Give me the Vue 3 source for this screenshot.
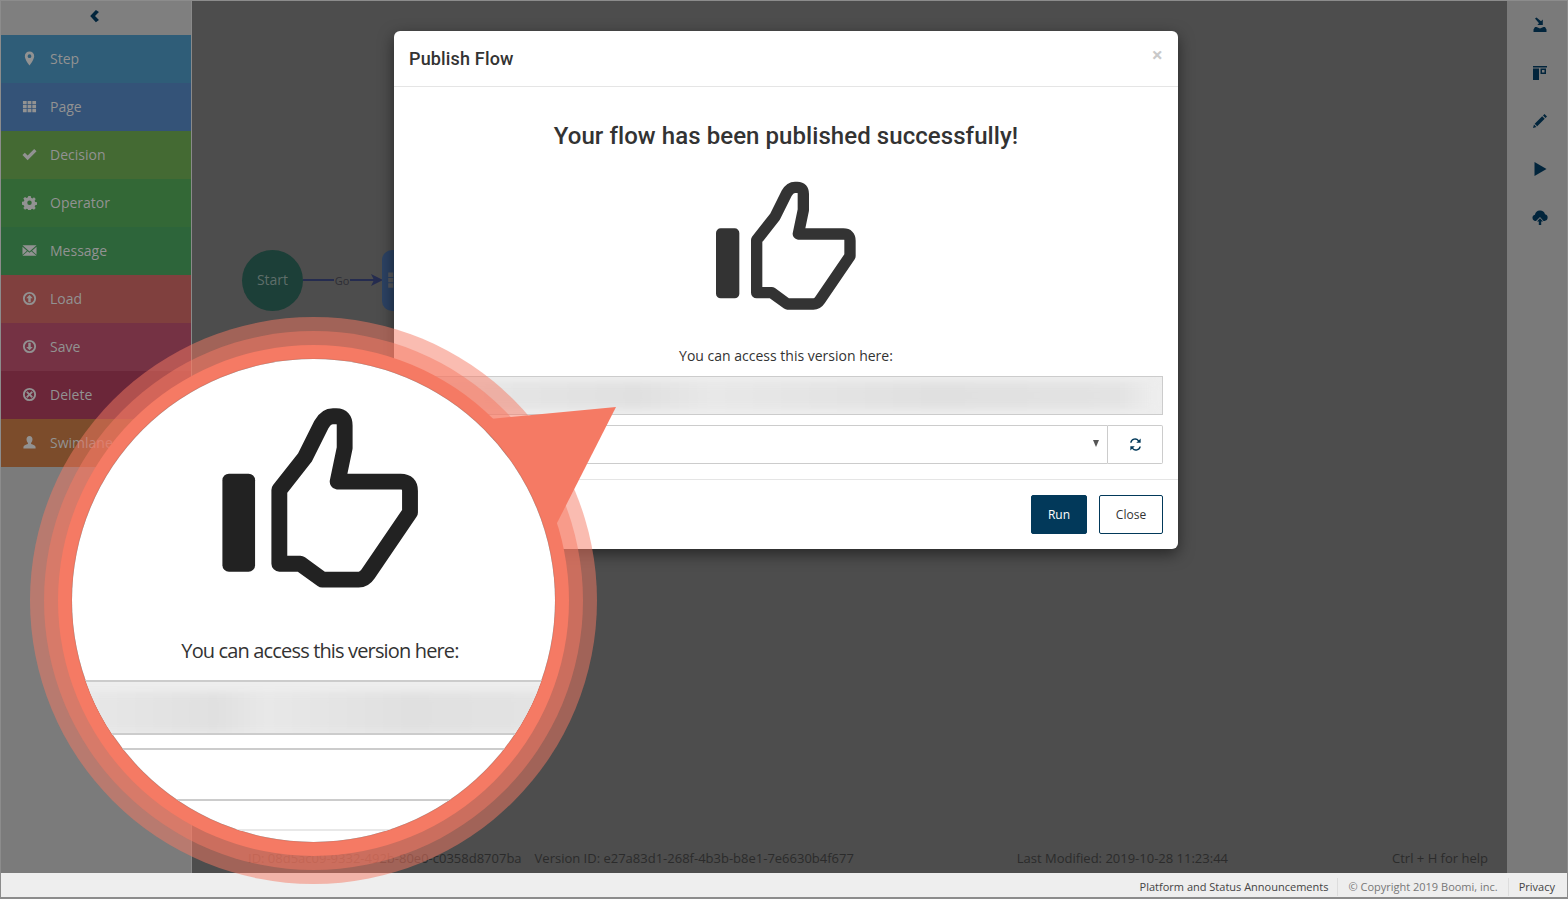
<template>
  <div class="app">
    <div class="workspace">
      <aside class="palette">
        <div class="palette__toggle">
          <svg class="palette__chevron" viewBox="0 0 16 16"><path d="M9 1 12.500 3.500 8 8 12.500 12.500 9 15 2.500 8z" /></svg>
        </div>
        <div v-for="item in paletteItems" :key="item.label" class="palette__item" :style="{ background: item.color }">
          <svg class="palette__icon" viewBox="0 0 16 16"><path fill-rule="evenodd" :d="item.icon" /></svg>
          <span>{{ item.label }}</span>
        </div>
      </aside>

      <main class="canvas">
        <div class="node-start">Start</div>
        <div class="node-link">
          <span class="node-link__line"></span>
          <span class="node-link__label">Go</span>
          <span class="node-link__line node-link__line--short"></span>
          <svg class="node-link__head" viewBox="0 0 12 12"><path d="M0 0 12 6 0 12 3 6z" /></svg>
        </div>
        <div class="node-page">
          <svg viewBox="0 0 16 16"><path :d="icons.grid" /></svg>
        </div>

        <div class="canvas__status">
          <span>ID: 08d5ac09-9332-492b-80e0-c0358d8707ba</span>
          <span>Version ID: e27a83d1-268f-4b3b-b8e1-7e6630b4f677</span>
          <span class="canvas__modified">Last Modified: 2019-10-28 11:23:44</span>
          <span class="canvas__help">Ctrl + H for help</span>
        </div>
      </main>

      <aside class="toolbar">
        <svg v-for="tool in toolIcons" :key="tool" class="toolbar__icon" viewBox="0 0 16 16"><path fill-rule="evenodd" :d="tool" /></svg>
      </aside>
    </div>

    <footer class="footer">
      <span class="footer__link">Platform and Status Announcements</span>
      <span class="footer__copy">© Copyright 2019 Boomi, inc.</span>
      <span class="footer__link">Privacy</span>
    </footer>

    <section class="modal">
      <header class="modal__header">
        <h4>Publish Flow</h4>
        <span class="modal__close">×</span>
      </header>
      <div class="modal__body">
        <h3>Your flow has been published successfully!</h3>
        <svg class="thumb" viewBox="0 0 600 510">
          <rect x="108" y="205" width="70" height="210" rx="14" />
          <path :d="thumbPath" />
        </svg>
        <p>You can access this version here:</p>
        <div class="url-box"><div class="url-box__blur"></div></div>
        <div class="player-row">
          <div class="player-row__select"><span class="caret"></span></div>
          <button class="player-row__refresh" type="button">
            <svg viewBox="0 0 16 16"><path :d="icons.refresh" /></svg>
          </button>
        </div>
      </div>
      <div class="modal__footer">
        <button class="btn btn--primary" type="button">Run</button>
        <button class="btn" type="button">Close</button>
      </div>
    </section>

    <!-- callout -->
    <div class="lens">
      <svg class="lens__pointer" viewBox="0 0 600 300"><polygon points="586,90 460,102 440,160 500,240 526,208" /></svg>
      <div class="lens__ring">
        <div class="lens__solid">
          <div class="lens__glass">
            <svg class="lens__thumb" viewBox="0 0 600 510">
              <rect x="108" y="205" width="70" height="210" rx="14" />
              <path :d="thumbPath" />
            </svg>
            <div class="lens__text">You can access this version here:</div>
            <div class="lens__input"><div class="lens__blur"></div></div>
            <div class="lens__select"></div>
            <div class="lens__rule"></div>
          </div>
        </div>
      </div>
    </div>
  </div>
</template>

<script setup>
const ring = "M8 1a7 7 0 1 0 0 14A7 7 0 0 0 8 1zm0 2a5 5 0 1 1 0 10A5 5 0 0 1 8 3z"

const icons = {
  pin: "M8 .5a5 5 0 0 0-5 5C3 9 8 15.500 8 15.500S13 9 13 5.500a5 5 0 0 0-5-5zm0 3a2 2 0 1 1 0 4 2 2 0 0 1 0-4z",
  grid: "M1 2h4v3.500H1zM6 2h4v3.500H6zM11 2h4v3.500h-4zM1 6.300h4v3.500H1zM6 6.300h4v3.500H6zM11 6.300h4v3.500h-4zM1 10.600h4v3.500H1zM6 10.600h4v3.500H6zM11 10.600h4v3.500h-4z",
  check: "M.5 8.500 3 6l3 3 7-7 2.500 2.500L6 14z",
  cog: "M6.700 1h2.600l.4 2 1.400.6 1.700-1.100 1.800 1.800-1.100 1.700.6 1.400 2 .4v2.600l-2 .4-.6 1.400 1.100 1.700-1.800 1.800-1.700-1.100-1.400.6-.4 2H6.700l-.4-2-1.400-.6-1.700 1.100-1.800-1.800 1.100-1.700-.6-1.400-2-.4V7.300l2-.4.6-1.400-1.100-1.700 1.800-1.800 1.700 1.100 1.400-.6zM8 5.800a2.400 2.400 0 1 0 0 4.800 2.400 2.400 0 0 0 0-4.800z",
  mail: "M.5 2.500h15L8 9zM.5 4l4.800 4.200L.5 12.500zM15.500 4l-4.800 4.200 4.800 4.300zM.5 13.500l5.600-4.700L8 10.500l1.900-1.700 5.600 4.700z",
  up: ring + "M8 4l3.500 3.600H9.300V12H6.700V7.600H4.500z",
  down: ring + "M8 12 4.500 8.400h2.200V4h2.600v4.400h2.200z",
  remove: ring + "M5.800 4.400 8 6.600l2.200-2.200 1.400 1.400L9.400 8l2.200 2.200-1.400 1.400L8 9.400l-2.200 2.200-1.400-1.400L6.600 8 4.400 5.800z",
  user: "M8 1c-2 0-3.200 1.500-3.200 3.500 0 1.500.6 3 1.500 3.800v1.200C4 10.200 1.500 11 1.500 13v1.500h13V13c0-2-2.500-2.800-4.800-3.500V8.300c.9-.8 1.500-2.300 1.500-3.800C11.200 2.500 10 1 8 1z",
  refresh: "M13.500 1.500v4.700H8.800l1.800-1.800A3.800 3.800 0 0 0 3.800 6H2.300a5.300 5.300 0 0 1 9.400-2.500zM2.500 14.500V9.800h4.700l-1.800 1.800a3.800 3.800 0 0 0 6.800-1.600h1.500a5.300 5.300 0 0 1-9.400 2.500z",
}

const paletteItems = [
  { label: "Step", color: "#2f5d78", icon: icons.pin },
  { label: "Page", color: "#345378", icon: icons.grid },
  { label: "Decision", color: "#446a33", icon: icons.check },
  { label: "Operator", color: "#336836", icon: icons.cog },
  { label: "Message", color: "#2d653a", icon: icons.mail },
  { label: "Load", color: "#80403e", icon: icons.up },
  { label: "Save", color: "#753244", icon: icons.down },
  { label: "Delete", color: "#6b2639", icon: icons.remove },
  { label: "Swimlane", color: "#7c4c2b", icon: icons.user },
]

const toolIcons = [
  "M3 1.500 4.500.5 9 4.300 10.800 2.500V8H5.300L7 6.300zM1.500 12.500 3 10h1.500L8 11.500 11.500 10H13l1.500 2.500V15h-13z",
  "M1 1h14v1.500H1zM1 3.500h6V15H1zM8.500 3.500H14V9H8.500zM10 5v2.500h2.500V5z",
  "M12.500 1 15 3.500l-1.500 1.500-2.500-2.500zM10.200 3.300l2.500 2.500L5.200 13.300l-2.500-2.500zM2 11.500 4.500 14l-3.500 1z",
  "M2.500 1 14.500 8 2.500 15z",
  "M4 12H3.500a3.200 3.200 0 0 1-.6-6.300A5.200 5.200 0 0 1 13 5.300 3.400 3.400 0 0 1 12.500 12H11.500L8 8zM8 9.200l3 3.300H9.200V16H6.800v-3.500H5z",
]

const thumbPath =
  "M230 398V240L285 170L320 100Q330 82 345 82H352Q370 82 370 102V150L355 222H490Q510 222 510 242V288L420 420Q412 432 400 432H322L275 398Z"
</script>

<style scoped>
.app {
  position: relative;
  width: 1568px;
  height: 899px;
  box-sizing: border-box;
  border: 1px solid #8c8c8c;
  border-bottom-width: 2px;
  display: flex;
  flex-direction: column;
  overflow: hidden;
  font-family: "Open Sans", sans-serif;
}

.workspace {
  flex: 1;
  display: flex;
  min-height: 0;
}

/* PALETTE */

.palette {
  width: 191px;
  flex: none;
  box-sizing: border-box;
  background: #7b7b7b;
  border-right: 1px solid #8a8a8a;
}

.palette__toggle {
  height: 34px;
  box-sizing: border-box;
  padding: 0 0 4px;
  display: flex;
  align-items: center;
  justify-content: center;
  background: #7f7f7f;
}

.palette__chevron {
  width: 14px;
  height: 14px;
  margin-left: -2px;
  fill: #02253c;
}

.palette__item {
  height: 48px;
  box-sizing: border-box;
  display: flex;
  align-items: center;
  gap: 13px;
  padding: 0 0 2px 21px;
  color: #929292;
  font-size: 14px;
}

.palette__icon {
  width: 15px;
  height: 15px;
  fill: #929292;
}

/* CANVAS */

.canvas {
  position: relative;
  flex: 1;
  display: flex;
  align-items: flex-end;
  background: #4d4d4d;
}

.node-start {
  position: absolute;
  left: 50px;
  top: 249px;
  width: 61px;
  height: 61px;
  box-sizing: border-box;
  padding-bottom: 2px;
  border-radius: 50%;
  background: #1c3f38;
  color: #5f6e6a;
  font-size: 14px;
  display: flex;
  align-items: center;
  justify-content: center;
}

.node-link {
  position: absolute;
  left: 111px;
  top: 269px;
  width: 80px;
  height: 20px;
  display: flex;
  align-items: center;
}

.node-link__line {
  width: 31px;
  height: 2px;
  background: #252c4f;
}

.node-link__line--short {
  width: 24px;
}

.node-link__label {
  width: 16px;
  color: #2e2e35;
  font-size: 11px;
  text-align: center;
}

.node-link__head {
  width: 12px;
  height: 12px;
  margin-left: -3px;
  flex: none;
  fill: #252c4f;
}

.node-page {
  position: absolute;
  left: 190px;
  top: 249px;
  width: 60px;
  height: 61px;
  border-radius: 10px;
  background: #2c4263;
}

.node-page svg {
  position: absolute;
  left: 5px;
  top: 20px;
  width: 20px;
  height: 20px;
  fill: #56585c;
}

.canvas__status {
  flex: 1;
  display: flex;
  gap: 13px;
  padding: 0 19px 6px 56px;
  color: #2b2b2b;
  font-size: 13px;
  line-height: 17px;
  white-space: nowrap;
}

.canvas__modified {
  margin-left: auto;
}

.canvas__help {
  margin-left: 151px;
}

/* TOOLBAR */

.toolbar {
  width: 60px;
  flex: none;
  display: flex;
  flex-direction: column;
  align-items: center;
  gap: 32px;
  padding: 16px 0 0 5px;
  box-sizing: border-box;
  background: #7a7a7a;
}

.toolbar__icon {
  width: 16px;
  height: 16px;
  fill: #02253c;
}

/* FOOTER */

.footer {
  height: 24px;
  flex: none;
  box-sizing: border-box;
  display: flex;
  justify-content: flex-end;
  align-items: center;
  padding: 3px 12px 0 0;
  background: #eeeeee;
  font-size: 11px;
  color: #444444;
}

.footer span {
  line-height: 18px;
  white-space: nowrap;
}

.footer__copy {
  margin: 0 10px 0 9px;
  padding: 0 10px;
  border-left: 1px solid #dddddd;
  border-right: 1px solid #dddddd;
  color: #777777;
}

/* MODAL */

.modal {
  position: absolute;
  left: 393px;
  top: 30px;
  width: 784px;
  height: 518px;
  box-sizing: border-box;
  display: flex;
  flex-direction: column;
  background: #ffffff;
  border-radius: 6px;
  box-shadow: 0 5px 15px rgba(0, 0, 0, 0.5);
}

.modal__header {
  height: 56px;
  flex: none;
  box-sizing: border-box;
  display: flex;
  align-items: center;
  justify-content: space-between;
  padding: 0 15px;
  border-bottom: 1px solid #e5e5e5;
}

.modal__header h4 {
  margin: 0;
  color: #333333;
  font-family: Roboto, sans-serif;
  font-size: 18px;
  font-weight: 500;
  letter-spacing: 0.16px;
}

.modal__close {
  margin: -9px 0 0;
  color: #c9c9c9;
  font-size: 20px;
  font-weight: 700;
}

.modal__body {
  flex: 1;
  display: flex;
  flex-direction: column;
  align-items: center;
  padding: 0 15px;
}

.modal__body h3 {
  margin: 34px 0 0;
  color: #333333;
  font-family: Roboto, sans-serif;
  font-size: 24px;
  line-height: 30px;
  font-weight: 500;
  letter-spacing: 0.07px;
}

.thumb {
  width: 200px;
  height: 170px;
  margin: 9px 12px 0 0;
  flex: none;
}

.thumb rect {
  fill: #333333;
}

.lens__thumb rect {
  fill: #222222;
}

.thumb path,
.lens__thumb path {
  fill: #ffffff;
  stroke: #333333;
  stroke-width: 34;
  stroke-linejoin: round;
}

.lens__thumb path {
  stroke: #222222;
}

.modal__body p {
  margin: 16px 0 0;
  color: #333333;
  font-size: 14px;
  line-height: 20px;
}

.url-box {
  width: 100%;
  height: 39px;
  margin-top: 10px;
  box-sizing: border-box;
  flex: none;
  padding: 5px;
  overflow: hidden;
  background: #eeeeee;
  border: 1px solid #cccccc;
}

.url-box__blur,
.lens__blur {
  height: 100%;
  background: linear-gradient(90deg, #e8e8e8, #e0e0e0 30%, #e8e8e8 40%, #e0e0e0 70%, #e3e3e3 95%, #eeeeee);
  filter: blur(4px);
}

.player-row {
  width: 100%;
  height: 39px;
  margin-top: 10px;
  flex: none;
  display: flex;
}

.player-row__select {
  flex: 1;
  display: flex;
  align-items: center;
  justify-content: flex-end;
  padding-right: 8px;
  border: 1px solid #cccccc;
  border-radius: 2px 0 0 2px;
}

.caret {
  width: 0;
  height: 0;
  margin-top: -2px;
  border-left: 3.500px solid transparent;
  border-right: 3.500px solid transparent;
  border-top: 7px solid #555555;
}

.player-row__refresh {
  width: 55px;
  padding: 0;
  background: #ffffff;
  border: 1px solid #cccccc;
  border-left: 0;
  border-radius: 0 2px 2px 0;
  display: flex;
  align-items: center;
  justify-content: center;
}

.player-row__refresh svg {
  width: 15px;
  height: 15px;
  fill: #02395a;
}

.modal__footer {
  height: 70px;
  flex: none;
  box-sizing: border-box;
  display: flex;
  justify-content: flex-end;
  gap: 12px;
  padding: 15px;
  border-top: 1px solid #e5e5e5;
}

.btn {
  width: 64px;
  padding: 0;
  background: #ffffff;
  border: 1px solid #02395a;
  border-radius: 2px;
  color: #333333;
  font-family: "Open Sans", sans-serif;
  font-size: 12px;
}

.btn--primary {
  width: 56px;
  background: #02395a;
  color: #ffffff;
}

/* LENS */

.lens {
  position: absolute;
  left: 29px;
  top: 316px;
  width: 567px;
  height: 567px;
  box-sizing: border-box;
  padding: 14px;
  border-radius: 50%;
  background: rgba(245, 122, 100, 0.5);
}

.lens__pointer {
  position: absolute;
  left: 0;
  top: 0;
  width: 600px;
  height: 300px;
  fill: #f57a64;
  z-index: 2;
}

.lens__ring {
  height: 100%;
  box-sizing: border-box;
  padding: 14px;
  border-radius: 50%;
  background: rgba(245, 122, 100, 0.5);
}

.lens__solid {
  height: 100%;
  box-sizing: border-box;
  padding: 14px;
  border-radius: 50%;
  background: #f57a64;
}

.lens__glass {
  position: relative;
  z-index: 3;
  height: 100%;
  display: flex;
  flex-direction: column;
  border-radius: 50%;
  background: #ffffff;
  box-shadow: 0 0 1px #555555;
  overflow: hidden;
}

.lens__thumb {
  width: 280px;
  height: 238px;
  flex: none;
  margin: 19px 0 0 100px;
}

.lens__text {
  margin-top: 20px;
  padding-left: 13px;
  color: #333333;
  font-size: 20px;
  line-height: 30px;
  letter-spacing: -0.85px;
  text-align: center;
}

.lens__input {
  height: 55px;
  margin-top: 14px;
  flex: none;
  box-sizing: border-box;
  padding: 10px 0 0;
  overflow: hidden;
  background: #eeeeee;
  border-top: 2px solid #cccccc;
  border-bottom: 2px solid #cccccc;
}

.lens__select {
  height: 53px;
  margin-top: 13px;
  flex: none;
  box-sizing: border-box;
  border-top: 2px solid #cccccc;
  border-bottom: 2px solid #cccccc;
}

.lens__rule {
  height: 2px;
  margin-top: 28px;
  flex: none;
  background: #e8e8e8;
}
</style>

<style>
html,
body {
  margin: 0;
  background: #4d4d4d;
}
</style>
